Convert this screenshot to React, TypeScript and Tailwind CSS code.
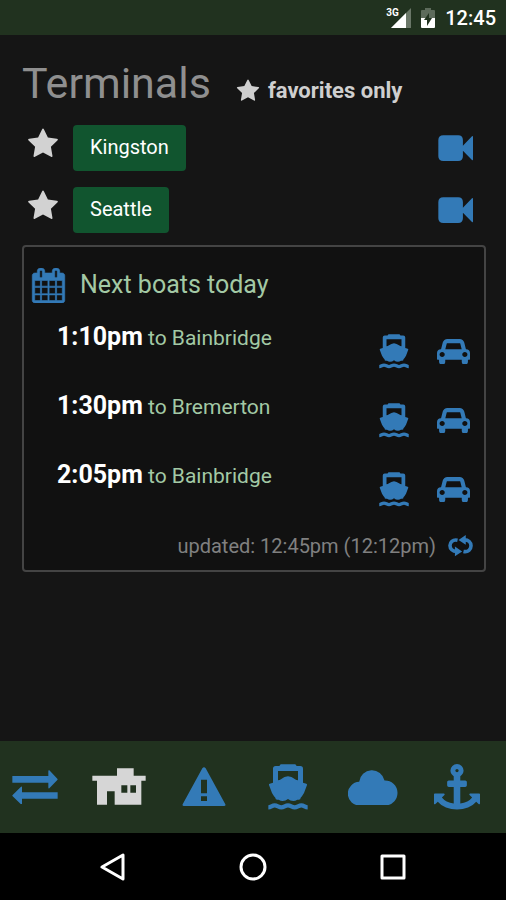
import React, { useState } from 'react';

type IconProps = { className?: string };

const StarIcon: React.FC<IconProps> = ({ className }) => (
  <svg viewBox="0 0 1792 1792" className={className} fill="currentColor" aria-hidden="true">
    <path d="M1728 647q0 22-26 48l-363 354 86 500q1 7 1 20 0 21-10.5 35.5t-30.5 14.5q-19 0-40-12l-449-236-449 236q-22 12-40 12-21 0-31.5-14.5t-10.5-35.5q0-6 2-20l86-500-364-354q-25-27-25-48 0-37 56-46l502-73 225-455q19-41 49-41t49 41l225 455 502 73q56 9 56 46z" />
  </svg>
);

const CameraIcon: React.FC<IconProps> = ({ className }) => (
  <svg viewBox="0 0 104 78" className={className} fill="currentColor" aria-hidden="true">
    <path d="M16 1h44q14 0 14 14v17L101 4q3-2 3 2v66q0 4-3 2L74 47v16q0 14-14 14H16Q1 77 1 63V15Q1 1 16 1z" />
  </svg>
);

const CalendarIcon: React.FC<IconProps> = ({ className }) => (
  <svg viewBox="0 0 1792 1792" className={className} fill="currentColor" stroke="currentColor" strokeWidth="30" aria-hidden="true">
    <path d="M192 1664h288v-288h-288v288zm352 0h320v-288h-320v288zm-352-352h288v-320h-288v320zm352 0h320v-320h-320v320zm-352-384h288v-288h-288v288zm736 736h320v-288h-320v288zm-384-736h320v-288h-320v288zm768 736h288v-288h-288v288zm-384-352h320v-320h-320v320zm-352-864v-288q0-13-9.5-22.5t-22.5-9.5h-64q-13 0-22.5 9.5t-9.5 22.5v288q0 13 9.5 22.5t22.5 9.5h64q13 0 22.5-9.5t9.5-22.5zm736 864h288v-320h-288v320zm-384-384h320v-288h-320v288zm384 0h288v-288h-288v288zm32-480v-288q0-13-9.5-22.5t-22.5-9.5h-64q-13 0-22.5 9.5t-9.5 22.5v288q0 13 9.5 22.5t22.5 9.5h64q13 0 22.5-9.5t9.5-22.5zm384-64v1280q0 52-38 90t-90 38h-1408q-52 0-90-38t-38-90v-1280q0-52 38-90t90-38h128v-96q0-66 47-113t113-47h64q66 0 113 47t47 113v96h384v-96q0-66 47-113t113-47h64q66 0 113 47t47 113v96h128q52 0 90 38t38 90z" />
  </svg>
);

const BoatIcon: React.FC<IconProps> = ({ className }) => (
  <svg viewBox="0 0 120 138" className={className} fill="currentColor" aria-hidden="true">
    <path fillRule="evenodd" d="M38 1h44l4 5h11q8 0 8 8v42l10 3q3 1 2 4l-9 24q-5 9-10 14 0 6-6 6h-4q-6 4-12 4-9 0-16-6-7 6-16 6-6 0-12-4h-4q-6 0-6-6-5-5-10-14L3 63q-1-3 2-4l10-3V14q0-8 8-8h11zM30 21v28q5 0 10-4 9-7 20-8 11 1 20 8 5 4 10 4V21z" />
    <path d="M1 130c8 0 11-6 19-6s12 6 20 6 12-6 20-6 12 6 20 6 12-6 20-6 11 6 19 6" fill="none" stroke="currentColor" strokeWidth="13" />
  </svg>
);

const CarIcon: React.FC<IconProps> = ({ className }) => (
  <svg viewBox="0 128 2048 1536" className={className} fill="currentColor" aria-hidden="true">
    <path d="M480 1088q0-66-47-113t-113-47-113 47-47 113 47 113 113 47 113-47 47-113zm36-320h1016l-89-357q-2-8-14-17.5t-21-9.5h-768q-9 0-21 9.5t-14 17.5zm1372 320q0-66-47-113t-113-47-113 47-47 113 47 113 113 47 113-47 47-113zm160-96v384q0 14-9 23t-23 9h-96v128q0 80-56 136t-136 56-136-56-56-136v-128h-1024v128q0 80-56 136t-136 56-136-56-56-136v-128h-96q-14 0-23-9t-9-23v-384q0-93 65.5-158.5t158.5-65.5h28l105-419q23-94 104-157.5t179-63.5h768q98 0 179 63.5t104 157.5l105 419h28q93 0 158.5 65.5t65.5 158.5z" />
  </svg>
);

const RefreshIcon: React.FC<IconProps> = ({ className }) => (
  <svg viewBox="0 0 76 66" className={className} fill="none" stroke="currentColor" strokeWidth="11" aria-hidden="true">
    <path d="M29 16C14 13 6 22 6 32s8 18 20 18" />
    <path d="M47 50c14 3 23-6 23-17S62 15 50 15" />
    <path d="M21 35v30l22-15zM54 0v30L32 15z" fill="currentColor" stroke="none" />
  </svg>
);

const ArrowsIcon: React.FC<IconProps> = ({ className }) => (
  <svg viewBox="0 0 138 104" className={className} fill="currentColor" aria-hidden="true">
    <path d="M1 18h108V3q0-3 3-2l24 25q2 2 0 4l-24 25q-3 1-3-2V38H1zM137 67v19H30v15q0 3-3 2L2 79q-2-2 0-4l25-25q3-1 3 2v15z" />
  </svg>
);

const TerminalIcon: React.FC<IconProps> = ({ className }) => (
  <svg viewBox="0 0 162 112" className={className} fill="currentColor" aria-hidden="true">
    <path fillRule="evenodd" d="M75 1h50v22h36v15h-13v72H68V70H45v40H15V38H1V23h74zM88 52v22h18V52zM115 52v22h17V52z" />
  </svg>
);

const AlertIcon: React.FC<IconProps> = ({ className }) => (
  <svg viewBox="0 0 132 118" className={className} fill="currentColor" aria-hidden="true">
    <path fillRule="evenodd" d="M61 4q5-6 10 0l59 108q2 5-4 5H6q-6 0-4-5zM57 38v41h18V38zM57 88v14h18V88z" />
  </svg>
);

const CloudIcon: React.FC<IconProps> = ({ className }) => (
  <svg viewBox="0 0 152 112" className={className} fill="currentColor" aria-hidden="true">
    <path d="M37 111a36 36 0 0 1-3-72 39 39 0 0 1 77-4 38 38 0 0 1 3 76z" />
  </svg>
);

const AnchorIcon: React.FC<IconProps> = ({ className }) => (
  <svg viewBox="0 0 1792 1792" className={className} fill="currentColor" aria-hidden="true">
    <path d="M960 256q0-26-19-45t-45-19-45 19-19 45 19 45 45 19 45-19 19-45zm832 928v352q0 22-20 30-8 2-12 2-12 0-23-9l-93-93q-119 143-318.5 226.5t-429.5 83.5-429.5-83.5-318.5-226.5l-93 93q-9 9-23 9-4 0-12-2-20-8-20-30v-352q0-14 9-23t23-9h352q22 0 30 20 8 19-7 35l-100 100q67 91 189.5 153.5t271.5 82.5v-647h-192q-26 0-45-19t-19-45v-128q0-26 19-45t45-19h192v-163q-58-34-93-92.5t-35-128.5q0-106 75-181t181-75 181 75 75 181q0 70-35 128.5t-93 92.5v163h192q26 0 45 19t19 45v128q0 26-19 45t-45 19h-192v647q149-20 271.5-82.5t189.5-153.5l-100-100q-15-16-7-35 8-20 30-20h352q14 0 23 9t9 23z" />
  </svg>
);

const terminals = ['Kingston', 'Seattle'];

const boats = [
  { time: '1:10pm', to: 'Bainbridge' },
  { time: '1:30pm', to: 'Bremerton' },
  { time: '2:05pm', to: 'Bainbridge' },
];

const tabs = [
  { id: 'routes', label: 'Routes', icon: <ArrowsIcon className="w-[46px]" /> },
  { id: 'terminals', label: 'Terminals', icon: <TerminalIcon className="w-[54px]" /> },
  { id: 'alerts', label: 'Alerts', icon: <AlertIcon className="w-11" /> },
  { id: 'ferries', label: 'Ferries', icon: <BoatIcon className="w-10" /> },
  { id: 'weather', label: 'Weather', icon: <CloudIcon className="w-[50px]" /> },
  { id: 'harbor', label: 'Harbor', icon: <AnchorIcon className="w-[46px]" /> },
];

const StatusBar = () => (
  <div className="h-[35px] bg-[#21321f] flex items-center justify-end pr-[10px] text-white">
    <div className="relative w-[25px] h-5 mr-[10px]">
      <span className="absolute left-0 top-0 text-[10px] leading-[10px] font-bold">3G</span>
      <svg viewBox="0 0 20 20" className="absolute right-0 bottom-0 w-5" aria-hidden="true">
        <path d="M20 0v20H0z" fill="#6a7768" />
        <path d="M15 5v15H0z" fill="#fff" />
      </svg>
    </div>
    <svg viewBox="0 0 14 20" className="w-[14px] mr-[10px]" aria-hidden="true">
      <path d="M4 0h6v2h3q1 0 1 1v8H0V3q0-1 1-1h3z" fill="#5d6b5b" />
      <path d="M0 10h14v9q0 1-1 1H1q-1 0-1-1z" fill="#fff" />
      <path d="M8 5v5h3l-5 8v-6H3z" fill="#21321f" />
    </svg>
    <span className="text-[20px] leading-6 font-medium">12:45</span>
  </div>
);

const App: React.FC = () => {
  const [favoritesOnly, setFavoritesOnly] = useState(true);
  const [activeTab, setActiveTab] = useState('terminals');

  return (
    <div className="min-h-screen flex flex-col bg-[#151515] font-[Roboto,sans-serif]">
      <StatusBar />

      <main className="flex-1 pl-[22px] pr-5 pt-[22px]">
        <header className="flex items-center gap-[25px] mb-4">
          <h1 className="text-[43px] leading-[52px] text-[#8f8f8f]">Terminals</h1>
          <button
            onClick={() => setFavoritesOnly(!favoritesOnly)}
            className="flex items-center gap-2 pt-4 text-[22px] leading-7 font-bold text-[#cfcfcf]"
          >
            <StarIcon className="w-6" /> favorites only
          </button>
        </header>

        <ul className="flex flex-col gap-4 mb-3">
          {terminals.map((name) => (
            <li key={name} className="flex items-center pl-[5px] pr-[13px]">
              <button aria-label={`Favorite ${name}`} className="text-[#d2d2d2] mr-[14px] pb-2">
                <StarIcon className="w-8" />
              </button>
              <button className="h-[46px] px-[17px] pb-[2px] rounded bg-[#11552f] text-white text-[20px] leading-6">{name}</button>
              <button aria-label={`${name} cameras`} className="ml-auto text-[#337ab7]">
                <CameraIcon className="w-[35px]" />
              </button>
            </li>
          ))}
        </ul>

        <section className="border-2 border-[#444] rounded bg-[#111] px-[7px] pt-[18px] pb-[10px]">
          <h2 className="flex items-center gap-[14px] text-[25px] leading-10 text-[#a3c9a5]">
            <CalendarIcon className="w-[35px] text-[#337ab7]" /> Next boats today
          </h2>
          <ul>
            {boats.map((boat) => (
              <li key={boat.time} className="flex h-[69px] pl-[26px] pr-[7px]">
                <p className="pt-4 text-[21px] leading-8 text-[#a3c9a5]">
                  <strong className="text-[25px] text-white">{boat.time}</strong> to {boat.to}
                </p>
                <div className="ml-auto flex items-center gap-7 pt-6 text-[#337ab7]">
                  <button aria-label={`${boat.time} ferry`}><BoatIcon className="w-[30px]" /></button>
                  <button aria-label={`${boat.time} car space`}><CarIcon className="w-[33px]" /></button>
                </div>
              </li>
            ))}
          </ul>
          <div className="flex items-center justify-end gap-3 pt-5 pr-1 text-[20px] leading-7 text-[#808080]">
            <span>updated: 12:45pm (12:12pm)</span>
            <button aria-label="Refresh" className="text-[#337ab7]"><RefreshIcon className="w-[25px]" /></button>
          </div>
        </section>
      </main>

      <nav className="h-[92px] bg-[#21321f] flex items-center justify-between pl-2 pr-[22px]">
        {tabs.map((tab) => (
          <button
            key={tab.id}
            aria-label={tab.label}
            onClick={() => setActiveTab(tab.id)}
            className={`flex justify-center w-[54px] ${activeTab === tab.id ? 'text-[#d6d6d6]' : 'text-[#337ab7]'}`}
          >
            {tab.icon}
          </button>
        ))}
      </nav>

      <div className="h-[67px] bg-black text-white flex items-center justify-center gap-[112px]">
        <button aria-label="Back">
          <svg viewBox="0 0 28 28" className="w-7" fill="none" stroke="currentColor" strokeWidth="3" strokeLinejoin="round"><path d="M24 2v24L3 14z" /></svg>
        </button>
        <button aria-label="Home">
          <svg viewBox="0 0 28 28" className="w-7" fill="none" stroke="currentColor" strokeWidth="3"><circle cx="14" cy="14" r="12" /></svg>
        </button>
        <button aria-label="Recent apps">
          <svg viewBox="0 0 28 28" className="w-7" fill="none" stroke="currentColor" strokeWidth="3" strokeLinejoin="round"><path d="M3 3h22v22H3z" /></svg>
        </button>
      </div>
    </div>
  );
};

export default App;
